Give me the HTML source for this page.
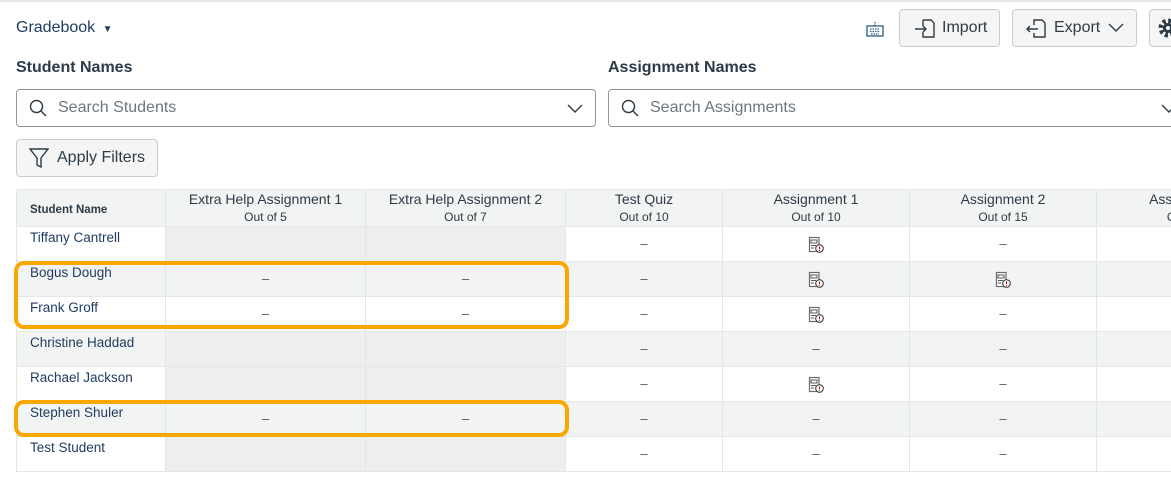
<!DOCTYPE html>
<html><head><style>
*{box-sizing:border-box;margin:0;padding:0}
html,body{width:1171px;height:484px;overflow:hidden}
body{background:#fff;font-family:"Liberation Sans",sans-serif;color:#2d3b45;position:relative}
.a{position:absolute}
.btn{position:absolute;background:#f5f5f5;border:1px solid #c7cdd1;border-radius:4px;font-size:16px;color:#2d3b45;display:flex;align-items:center;overflow:hidden}
.inp{position:absolute;border:1px solid #8b969e;border-radius:4px;height:38px;font-size:16px;color:#6b7780;display:flex;align-items:center}
.cell{position:absolute;border-right:1px solid #e4e7e8;border-bottom:1px solid #e4e7e8;font-size:13px;text-align:center;color:#555;overflow:hidden}
.name{font-size:13.5px;color:#1f3a5f;text-align:left;padding:3px 0 0 13px}
.hd{background:#f2f3f3;font-size:14px;color:#2d3b45;line-height:18px;padding-top:0}
.hd small{font-size:12px;display:block}
.box{position:absolute;border:4px solid #f9a800;border-radius:10px}
#wrap{position:absolute;left:0;top:0;width:1171px;height:484px;overflow:hidden}
</style></head><body><div id="wrap">
<div class="a" style="left:0;top:0;width:1171px;height:2px;background:#e8e8e8"></div>
<div class="a" style="left:16px;top:19px;font-size:16px;color:#1f3a5f">Gradebook <span style="font-size:10px;margin-left:3px">▼</span></div>
<svg class="a" style="left:866px;top:21px" width="18" height="16" viewBox="0 0 18 16"><rect x="1" y="5" width="16" height="10" fill="none" stroke="#2d5a85" stroke-width="1.3"/><path d="M9 5V1M4 8h10M4 10.5h10M5 13h8" stroke="#2d5a85" stroke-width="1.2" stroke-dasharray="1.5 1"/></svg>
<div class="btn" style="left:899px;top:9px;width:101px;height:38px;padding-left:14px"><svg width="22" height="22" viewBox="0 0 22 22" fill="none" stroke="#2d3b45" stroke-width="1.4"><path d="M9 3h8l3 3v14H9v-5M9 9V3M1 12h11M9 9l3 3-3 3"/></svg><span style="margin-left:6px">Import</span></div>
<div class="btn" style="left:1012px;top:9px;width:125px;height:38px;padding-left:13px"><svg width="22" height="22" viewBox="0 0 22 22" fill="none" stroke="#2d3b45" stroke-width="1.4"><path d="M8 8V3h8l3 3v14H8v-4M1 12h11M4 9l-3 3 3 3"/></svg><span style="margin-left:6px">Export</span><svg style="margin-left:8px" width="16" height="10" viewBox="0 0 16 10"><path d="M1 1l7 7 7-7" fill="none" stroke="#2d3b45" stroke-width="1.4"/></svg></div>
<div class="btn" style="left:1149px;top:9px;width:40px;height:38px;padding-left:8px"><svg width="20" height="20" viewBox="0 0 20 20"><circle cx="10" cy="10" r="7" fill="none" stroke="#2d3b45" stroke-width="5" stroke-dasharray="3 2.5"/><circle cx="10" cy="10" r="5" fill="#2d3b45"/><circle cx="10" cy="10" r="2" fill="#f5f5f5"/></svg></div>
<div class="a" style="left:16px;top:59px;font-size:16px;font-weight:bold">Student Names</div>
<div class="a" style="left:608px;top:59px;font-size:16px;font-weight:bold">Assignment Names</div>
<div class="inp" style="left:16px;top:89px;width:580px;padding-left:12px"><svg width="18" height="18" viewBox="0 0 18 18" fill="none" stroke="#2d3b45" stroke-width="1.4"><circle cx="7.5" cy="7.5" r="6"/><path d="M12 12l5 5"/></svg><span style="margin-left:11px">Search Students</span><svg style="position:absolute;right:12px;top:14px" width="16" height="10" viewBox="0 0 16 10"><path d="M1 1l7 7 7-7" fill="none" stroke="#2d3b45" stroke-width="1.4"/></svg></div>
<div class="inp" style="left:608px;top:89px;width:600px;padding-left:12px"><svg width="18" height="18" viewBox="0 0 18 18" fill="none" stroke="#2d3b45" stroke-width="1.4"><circle cx="7.5" cy="7.5" r="6"/><path d="M12 12l5 5"/></svg><span style="margin-left:11px">Search Assignments</span><svg style="position:absolute;left:552px;top:14px" width="16" height="10" viewBox="0 0 16 10"><path d="M1 1l7 7 7-7" fill="none" stroke="#2d3b45" stroke-width="1.4"/></svg></div>
<div class="btn" style="left:16px;top:139px;width:142px;height:38px;padding-left:12px"><svg width="20" height="22" viewBox="0 0 20 22" fill="none" stroke="#2d3b45" stroke-width="1.4"><path d="M1 2h18l-7 9v9l-4-2v-7z"/></svg><span style="margin-left:8px">Apply Filters</span></div>
<div id="t"></div>
</div>
<script>
var cols=[[16,150],[166,200],[366,200],[566,157],[723,187],[910,187],[1097,190]];
var hd=[["Student Name",""],["Extra Help Assignment 1","Out of 5"],["Extra Help Assignment 2","Out of 7"],["Test Quiz","Out of 10"],["Assignment 1","Out of 10"],["Assignment 2","Out of 15"],["Assignment 3","Out of 10"]];
var rows=[["Tiffany Cantrell","g","g","-","i","-",""],["Bogus Dough","-","-","-","i","i",""],["Frank Groff","-","-","-","i","-",""],["Christine Haddad","g","g","-","-","-",""],["Rachael Jackson","g","g","-","i","-",""],["Stephen Shuler","-","-","-","-","-",""],["Test Student","g","g","-","-","-",""]];
var icon='<svg width="18" height="18" viewBox="0 0 18 18" style="margin-top:9px"><rect x="2.5" y="1.5" width="9.5" height="14" fill="#fff" stroke="#6b6b6b" stroke-width="1.2"/><rect x="4" y="4" width="6" height="3" fill="none" stroke="#555" stroke-width="1"/><path d="M4 9.5h5M4 12h3" stroke="#555"/><circle cx="12.5" cy="12.5" r="3.8" fill="#fff" stroke="#444" stroke-width="1.1"/><path d="M12.5 10.5v2.5" stroke="#c00" stroke-width="1.1"/><circle cx="12.5" cy="14.3" r=".6" fill="#c00"/></svg>';
var h="";
cols.forEach(function(c,i){
 if(i==0)h+='<div class="cell hd" style="left:16px;top:189px;width:150px;height:38px;text-align:left;padding:11px 0 0 13px;font-size:11.5px;font-weight:bold;border-left:1px solid #e4e7e8;border-top:1px solid #e4e7e8">Student Name</div>';
 else h+='<div class="cell hd" style="left:'+c[0]+'px;top:189px;width:'+c[1]+'px;height:38px;border-top:1px solid #e4e7e8">'+hd[i][0]+'<small>'+hd[i][1]+'</small></div>';
});
rows.forEach(function(r,j){
 var y=227+35*j, st=(j%2==1);
 r.forEach(function(v,i){
  var c=cols[i];var bg=st?'#f2f4f4':'#fff';var inner='';
  if(v=='g')bg='#eeeeee';
  if(v=='-')inner='<div style="padding-top:9px">–</div>';
  if(v=='i')inner=icon;
  if(i==0)h+='<div class="cell name" style="left:16px;top:'+y+'px;width:150px;height:35px;background:'+bg+';border-left:1px solid #e4e7e8">'+v+'</div>';
  else h+='<div class="cell" style="left:'+c[0]+'px;top:'+y+'px;width:'+c[1]+'px;height:35px;background:'+bg+'">'+inner+'</div>';
 });
});
h+='<div class="box" style="left:14px;top:261px;width:555px;height:68px"></div>';
h+='<div class="box" style="left:14px;top:400px;width:555px;height:37px"></div>';
document.getElementById('t').innerHTML=h;
</script>
</body></html>
